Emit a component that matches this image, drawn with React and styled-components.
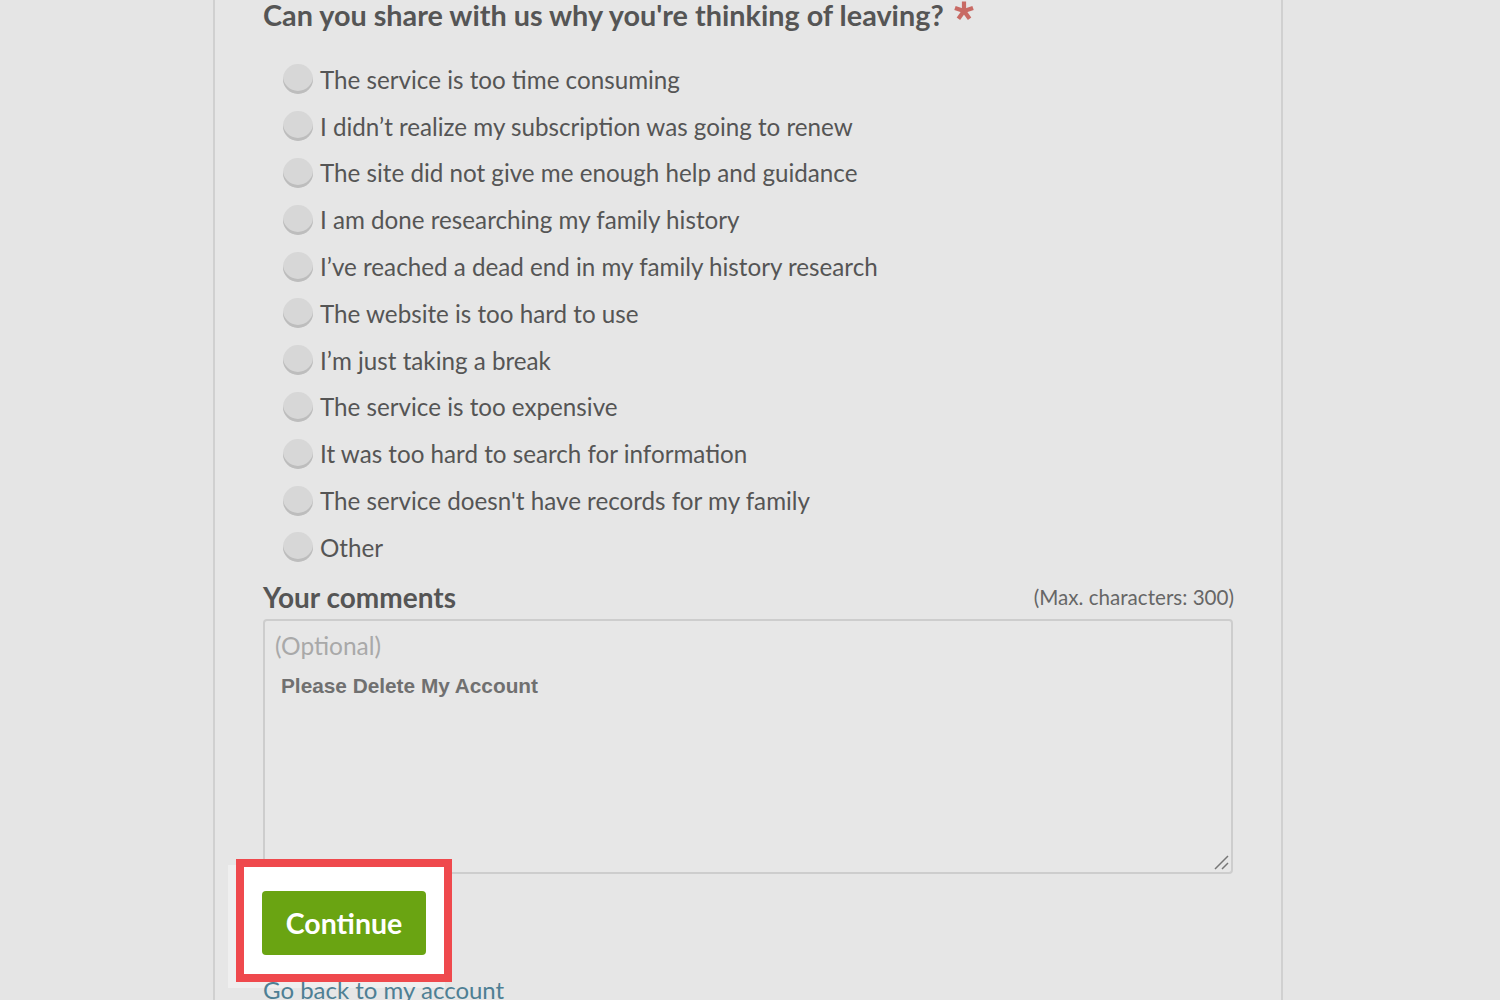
import React from "react";
import styled, { createGlobalStyle } from "styled-components";

const Global = createGlobalStyle`
  html, body { margin: 0; padding: 0; background: #e5e5e5; }
  body { width: 1500px; height: 1000px; overflow: hidden; font-family: "Lato", "Open Sans", sans-serif; }
`;

const Page = styled.div`
  width: 1500px;
  height: 1000px;
  display: flex;
  justify-content: flex-start;
  background: #e5e5e5;
`;

const Panel = styled.div`
  margin-left: 213px;
  width: 970px;
  height: 1000px;
  border-left: 2px solid #d0d0d0;
  border-right: 2px solid #d0d0d0;
  background: #e6e6e6;
  padding: 0 48px;
  box-sizing: content-box;
`;

const Inner = styled.div`
  width: 970px;
  margin-top: -4px;
  display: flex;
  flex-direction: column;
`;

const Question = styled.h2`
  margin: 0;
  font-family: "Lato", sans-serif;
  font-weight: 700;
  font-size: 28.8px;
  line-height: 38px;
  color: #555;
  display: flex;
  align-items: flex-start;
  gap: 9px;
`;

const Star = styled.svg`
  flex: none;
  margin-top: 4px;
`;

const Options = styled.ul`
  list-style: none;
  margin: 22px 0 0 0;
  padding: 0 0 0 20px;
  display: flex;
  flex-direction: column;
`;

const Option = styled.li`
  height: 46.8px;
  display: flex;
  align-items: center;
  gap: 7px;
  font-size: 24.2px;
  color: #555;
`;

const Radio = styled.span`
  width: 30px;
  height: 30px;
  border-radius: 50%;
  background: #d7d7d7;
  box-shadow: inset 0 -3px 0 #bdbdbd;
  flex: none;
`;

const CommentsHead = styled.div`
  display: flex;
  justify-content: space-between;
  align-items: center;
  margin-top: 9px;
  height: 34px;
`;

const CommentsLabel = styled.span`
  font-weight: 700;
  font-size: 28px;
  color: #555;
`;

const MaxChars = styled.span`
  font-size: 20.6px;
  color: #666;
  margin-right: -1px;
`;

const TextBox = styled.div`
  position: relative;
  margin-top: 5px;
  height: 255px;
  border: 2px solid #cdcdcd;
  border-radius: 4px;
  background: #e7e7e7;
  padding: 10px 10px;
  box-sizing: border-box;
`;

const Placeholder = styled.div`
  font-size: 24.5px;
  color: #a9a9a9;
  line-height: 30px;
`;

const Typed = styled.div`
  margin: 13px 0 0 6px;
  font-family: "Liberation Sans", Arial, sans-serif;
  font-weight: 700;
  font-size: 20.8px;
  color: #707070;
`;

const Grip = styled.svg`
  position: absolute;
  right: 2px;
  bottom: 2px;
`;

const ButtonArea = styled.div`
  position: relative;
  margin-top: 17px;
  height: 64px;
`;

const Glow = styled.div`
  position: absolute;
  left: -35px;
  top: -26px;
  width: 217px;
  height: 123px;
  background: #efefef;
`;

const Highlight = styled.div`
  position: absolute;
  left: -27px;
  top: -32px;
  width: 200px;
  height: 107px;
  border: 8px solid #ef494d;
  background: #ffffff;
`;

const ContinueButton = styled.button`
  position: relative;
  width: 164px;
  height: 64px;
  border: none;
  border-radius: 4px;
  background: #6aa412;
  color: #fff;
  font-family: "Lato", sans-serif;
  font-weight: 700;
  font-size: 28.5px;
  padding: 0;
  margin-left: -1px;
`;

const BackLink = styled.a`
  position: relative;
  display: block;
  margin-top: 20px;
  font-size: 24px;
  line-height: 30px;
  color: #4e7f94;
  text-decoration: none;
`;

const reasons = [
  "The service is too time consuming",
  "I didn’t realize my subscription was going to renew",
  "The site did not give me enough help and guidance",
  "I am done researching my family history",
  "I’ve reached a dead end in my family history research",
  "The website is too hard to use",
  "I’m just taking a break",
  "The service is too expensive",
  "It was too hard to search for information",
  "The service doesn't have records for my family",
  "Other",
];

const starArms = [0, 72, 144, 216, 288];

export default function App() {
  return (
    <Page>
      <Global />
      <Panel>
        <Inner>
          <Question>
            Can you share with us why you're thinking of leaving?
            <Star width="22" height="22" viewBox="-11 -11 22 22">
              {starArms.map((a) => (
                <line
                  key={a}
                  x1="0"
                  y1="0"
                  x2="0"
                  y2="-9.5"
                  stroke="#c86a64"
                  strokeWidth="4.2"
                  strokeLinecap="butt"
                  transform={`rotate(${a})`}
                />
              ))}
            </Star>
          </Question>
          <Options>
            {reasons.map((r) => (
              <Option key={r}>
                <Radio />
                {r}
              </Option>
            ))}
          </Options>
          <CommentsHead>
            <CommentsLabel>Your comments</CommentsLabel>
            <MaxChars>(Max. characters: 300)</MaxChars>
          </CommentsHead>
          <TextBox>
            <Placeholder>(Optional)</Placeholder>
            <Typed>Please Delete My Account</Typed>
            <Grip width="16" height="16" viewBox="0 0 16 16">
              <path d="M2 15 L15 2 M9 15 L15 9" stroke="#777" strokeWidth="1.5" fill="none" />
            </Grip>
          </TextBox>
          <ButtonArea>
            <Glow />
            <Highlight />
            <ContinueButton>Continue</ContinueButton>
          </ButtonArea>
          <BackLink href="#">Go back to my account</BackLink>
        </Inner>
      </Panel>
    </Page>
  );
}
